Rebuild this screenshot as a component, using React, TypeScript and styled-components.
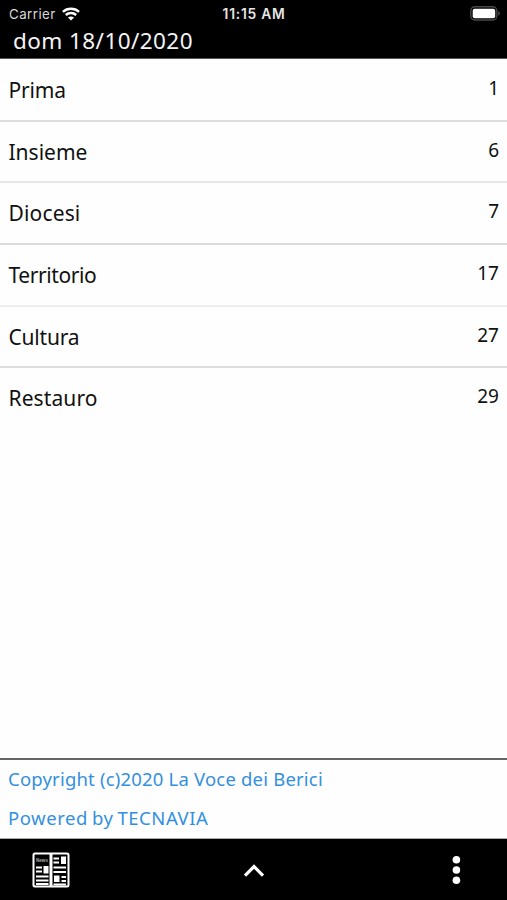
import React from "react";
import styled, { createGlobalStyle } from "styled-components";

const GlobalStyle = createGlobalStyle`
  * { box-sizing: border-box; }
  html, body { margin: 0; padding: 0; background: #fff; }
  body { font-family: "Noto Sans", "Open Sans", sans-serif; color: #111; overflow: hidden; }
`;

const Screen = styled.div`
  width: 507px;
  height: 900px;
  display: flex;
  flex-direction: column;
  background: #fefefe;
`;

const Header = styled.header`
  height: 59px;
  flex: none;
  background: #000;
  color: #f4f4f4;
  border-bottom: 1px solid #555;
`;

const StatusBar = styled.div`
  height: 27px;
  display: grid;
  grid-template-columns: 1fr auto 1fr;
  align-items: center;
  padding: 0 6px 0 9px;
  font-family: Inter, sans-serif;
  font-size: 13.3px;
`;

const Carrier = styled.div`
  display: flex;
  align-items: center;
  gap: 6px;
  color: #d8d8d8;
  letter-spacing: 0.45px;
`;

const Clock = styled.div`
  font-weight: 600;
  font-size: 13.8px;
  letter-spacing: 0.75px;
  margin-right: 2px;
  color: #e6e6e6;
`;

const Battery = styled.div`
  display: flex;
  justify-content: flex-end;
`;

const DateTitle = styled.h1`
  margin: 0;
  padding-left: 13px;
  font-size: 22.5px;
  line-height: 27px;
  letter-spacing: 0.42px;
  font-weight: 400;
`;

const Sections = styled.ul`
  flex: 1;
  margin: 0;
  padding: 1px 0 0;
  list-style: none;
`;

const Section = styled.li<{ $line: string }>`
  height: 61.7px;
  display: flex;
  justify-content: space-between;
  padding: 0 8px 0 8.5px;
  border-bottom: 2px solid ${(p) => p.$line};
`;

const Name = styled.span<{ $spacing: number }>`
  font-size: 21px;
  line-height: 60px;
  letter-spacing: ${(p) => p.$spacing}px;
`;

const Page = styled.span`
  font-size: 19px;
  line-height: 57px;
`;

const Credits = styled.footer`
  height: 81px;
  flex: none;
  padding-left: 8px;
  border-top: 2px solid #666;
  border-bottom: 1px solid #aaa;
  color: #3490de;
`;

const Credit = styled.div<{ $spacing: number; $wordGap?: number }>`
  font-size: 18.5px;
  line-height: 42px;
  letter-spacing: ${(p) => p.$spacing}px;
  word-spacing: ${(p) => p.$wordGap ?? 0}px;
  &:first-child { line-height: 37px; }
`;

const Toolbar = styled.nav`
  height: 61px;
  flex: none;
  display: grid;
  grid-template-columns: 1fr auto 1fr;
  align-items: center;
  padding: 0 46px 0 32px;
  background: #000;
`;

const ToolButton = styled.button<{ $align?: string; $shift?: number }>`
  display: flex;
  justify-self: ${(p) => p.$align ?? "start"};
  margin-right: ${(p) => p.$shift ?? 0}px;
  padding: 0;
  border: 0;
  background: none;
`;

const sections = [
  { name: "Prima", page: 1, line: "#dedede", spacing: -0.2 },
  { name: "Insieme", page: 6, line: "#e6e6e6", spacing: 0 },
  { name: "Diocesi", page: 7, line: "#dadada", spacing: 0.15 },
  { name: "Territorio", page: 17, line: "#eeeeee", spacing: -0.4 },
  { name: "Cultura", page: 27, line: "#dedede", spacing: -0.2 },
  { name: "Restauro", page: 29, line: "transparent", spacing: 0.1 },
];

const WifiIcon = () => (
  <svg width="18" height="14" viewBox="0 0 18 14" fill="none" stroke="#fff" strokeWidth="2.4">
    <path d="M0.9 4.9C5.4 0.7 12.6 0.7 17.1 4.9" />
    <path d="M3.8 8C6.8 5.3 11.2 5.3 14.2 8" />
    <path d="M9 13.6L5.9 10.5C7.6 9 10.4 9 12.1 10.5Z" fill="#fff" stroke="none" />
  </svg>
);

const BatteryIcon = () => (
  <svg width="31" height="15" viewBox="0 0 31 15">
    <rect x="0.8" y="0.8" width="26" height="13.2" rx="4" fill="none" stroke="#484848" strokeWidth="1.4" />
    <rect x="2.7" y="2.7" width="22.5" height="9.5" rx="2" fill="#fff" />
    <path d="M28.2 5C30.5 5.7 30.5 9.1 28.2 9.8Z" fill="#484848" />
  </svg>
);

const NewspaperIcon = () => (
  <svg width="38" height="36" viewBox="0 0 38 36">
    <rect x="1.5" y="1.5" width="35" height="33" rx="1.5" fill="#000" stroke="#fff" strokeWidth="2" />
    <path d="M19 1V35" stroke="#fff" strokeWidth="3" />
    <text x="4" y="9.5" fontFamily="Liberation Sans, sans-serif" fontSize="6" fontWeight="700" fill="#aaa" textLength="12" lengthAdjust="spacingAndGlyphs">News</text>
    <g stroke="#fff" strokeWidth="1.8" fill="none">
      <path d="M4 15.5H10M4 19.5H10M4 24.5H16.5M4 28.5H16.5M4 32H16.5" />
      <path d="M21.5 6.5H27M21.5 10.5H27M21.5 15.5H34M21.5 20H34M29.5 25H34M29.5 29H34M21.5 32.5H34" />
    </g>
    <path d="M11.5 14H16.5V21.5H11.5ZM29 4.5H34V12H29ZM22 23.5H27.5V30H22Z" fill="#fff" />
  </svg>
);

const ChevronUp = () => (
  <svg width="22" height="16" viewBox="0 0 22 16" fill="none">
    <path d="M2 13.6L11 4.6L20 13.6" stroke="#fff" strokeWidth="3.2" />
  </svg>
);

const MoreIcon = () => (
  <svg width="10" height="30" viewBox="0 0 10 30" fill="#fff">
    <circle cx="5.4" cy="4.7" r="3.8" />
    <circle cx="5.4" cy="15" r="3.8" />
    <circle cx="5.4" cy="25.3" r="3.8" />
  </svg>
);

export default function App() {
  return (
    <Screen>
      <GlobalStyle />
      <Header>
        <StatusBar>
          <Carrier>Carrier <WifiIcon /></Carrier>
          <Clock>11:15 AM</Clock>
          <Battery><BatteryIcon /></Battery>
        </StatusBar>
        <DateTitle>dom 18/10/2020</DateTitle>
      </Header>
      <Sections>
        {sections.map((s) => (
          <Section key={s.name} $line={s.line}>
            <Name $spacing={s.spacing}>{s.name}</Name>
            <Page>{s.page}</Page>
          </Section>
        ))}
      </Sections>
      <Credits>
        <Credit $spacing={0.19}>Copyright (c)2020 La Voce dei Berici</Credit>
        <Credit $spacing={0.55} $wordGap={-1.4}>Powered by TECNAVIA</Credit>
      </Credits>
      <Toolbar>
        <ToolButton aria-label="Editions"><NewspaperIcon /></ToolButton>
        <ToolButton aria-label="Expand" $align="center" $shift={-14}><ChevronUp /></ToolButton>
        <ToolButton aria-label="More" $align="end"><MoreIcon /></ToolButton>
      </Toolbar>
    </Screen>
  );
}
